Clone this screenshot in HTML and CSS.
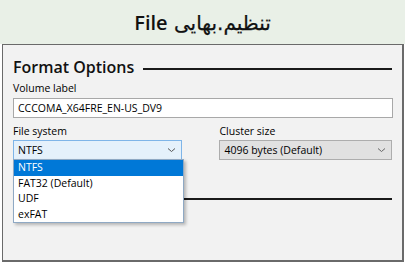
FILE: index.html
```html
<!DOCTYPE html>
<html lang="fa">
<head>
  <meta charset="UTF-8">
  <title>Format Options</title>
  <link rel="stylesheet" href="styles.css">
</head>
<body>
  <div class="banner">
    <h1 class="title"><span class="latin">File</span> <span dir="rtl">تنظیم.بهایی</span></h1>
  </div>

  <div class="frame">
    <div class="group-head">
      <h2>Format Options</h2>
      <span class="rule"></span>
    </div>

    <label class="field-label">Volume label</label>
    <div class="text-box">CCCOMA_X64FRE_EN-US_DV9</div>

    <div class="row">
      <div class="col">
        <label class="field-label">File system</label>
        <div class="combo open">
          <span>NTFS</span>
          <svg class="chev" width="9" height="6" viewBox="0 0 9 6"><path d="M1 1.5 L4.5 4.5 L8 1.5" fill="none" stroke="#555" stroke-width="1"/></svg>
          <ul class="drop-list">
            <li class="selected">NTFS</li>
            <li>FAT32 (Default)</li>
            <li>UDF</li>
            <li>exFAT</li>
          </ul>
        </div>
      </div>
      <div class="col col-right">
        <label class="field-label">Cluster size</label>
        <div class="combo">
          <span>4096 bytes (Default)</span>
          <svg class="chev" width="9" height="6" viewBox="0 0 9 6"><path d="M1 1.5 L4.5 4.5 L8 1.5" fill="none" stroke="#666" stroke-width="1"/></svg>
        </div>
      </div>
    </div>

    <div class="group-head second">
      <span class="rule"></span>
    </div>
  </div>
</body>
</html>
```

FILE: styles.css
```css
body {
  margin: 0;
  background: #ffffff;
  font-family: "Open Sans", "DejaVu Sans", sans-serif;
  color: #000;
  width: 415px;
  height: 266px;
  overflow: hidden;
}
.banner {
  width: 405px;
  height: 44px;
  background: #e9f0e7;
  display: flex;
  align-items: center;
  justify-content: center;
}
.title {
  margin: 0;
  padding-top: 1px;
  font-family: "DejaVu Sans", sans-serif;
  font-weight: normal;
  font-size: 20px;
  -webkit-text-stroke: 0.25px #111;
  color: #111;
}
.title .latin {
  font-family: "Open Sans", sans-serif;
  font-weight: 600;
  -webkit-text-stroke: 0;
}
.frame {
  box-sizing: border-box;
  margin-left: 2px;
  width: 402px;
  height: 218px;
  border: 1px solid #6a6a6a;
  border-right-width: 2px;
  border-bottom-width: 2px;
  background: #f2f2f2;
  padding: 10px 10px 0 10px;
}
.group-head {
  display: flex;
  align-items: center;
  gap: 9px;
  height: 24px;
}
.group-head h2 {
  margin: 0;
  font-size: 16px;
  font-weight: 600;
  color: #111;
}
.rule {
  flex: 1;
  height: 2px;
  background: #1a1a1a;
  margin-top: 3px;
}
.field-label {
  display: block;
  font-size: 10.5px;
  height: 16px;
  line-height: 16px;
}
.group-head + .field-label {
  margin-top: 1px;
}
.text-box {
  box-sizing: border-box;
  width: 380px;
  height: 20px;
  margin-top: 2px;
  border: 1px solid #a8a8a8;
  background: #fff;
  font-size: 10.5px;
  line-height: 18px;
  padding-left: 4px;
}
.row {
  display: flex;
  margin-top: 5px;
}
.col {
  width: 207px;
}
.col-right {
  width: 173px;
}
.combo {
  position: relative;
  box-sizing: border-box;
  height: 20px;
  margin-top: 1px;
  border: 1px solid #adadad;
  background: #e1e1e1;
  font-size: 10.5px;
  line-height: 18px;
  padding-left: 4px;
  display: flex;
  justify-content: space-between;
  align-items: center;
  padding-right: 5px;
}
.combo.open {
  width: 169px;
  background: #e5f1fb;
  border-color: #7fb5e8;
}
.chev {
  display: block;
}
.drop-list {
  position: absolute;
  left: -1px;
  top: 18px;
  width: 169px;
  margin: 0;
  padding: 0;
  list-style: none;
  background: #fff;
  border: 1px solid #8fa9c4;
  box-shadow: 2px 2px 3px rgba(0, 0, 0, 0.25);
  z-index: 2;
}
.drop-list li {
  height: 15.5px;
  line-height: 15px;
  padding-left: 4px;
  font-size: 10.5px;
}
.drop-list li.selected {
  background: #0078d7;
  color: #fff;
}
.group-head.second {
  margin-top: 34px;
  height: 10px;
}
.group-head.second .rule {
  margin-top: 0;
}
```
